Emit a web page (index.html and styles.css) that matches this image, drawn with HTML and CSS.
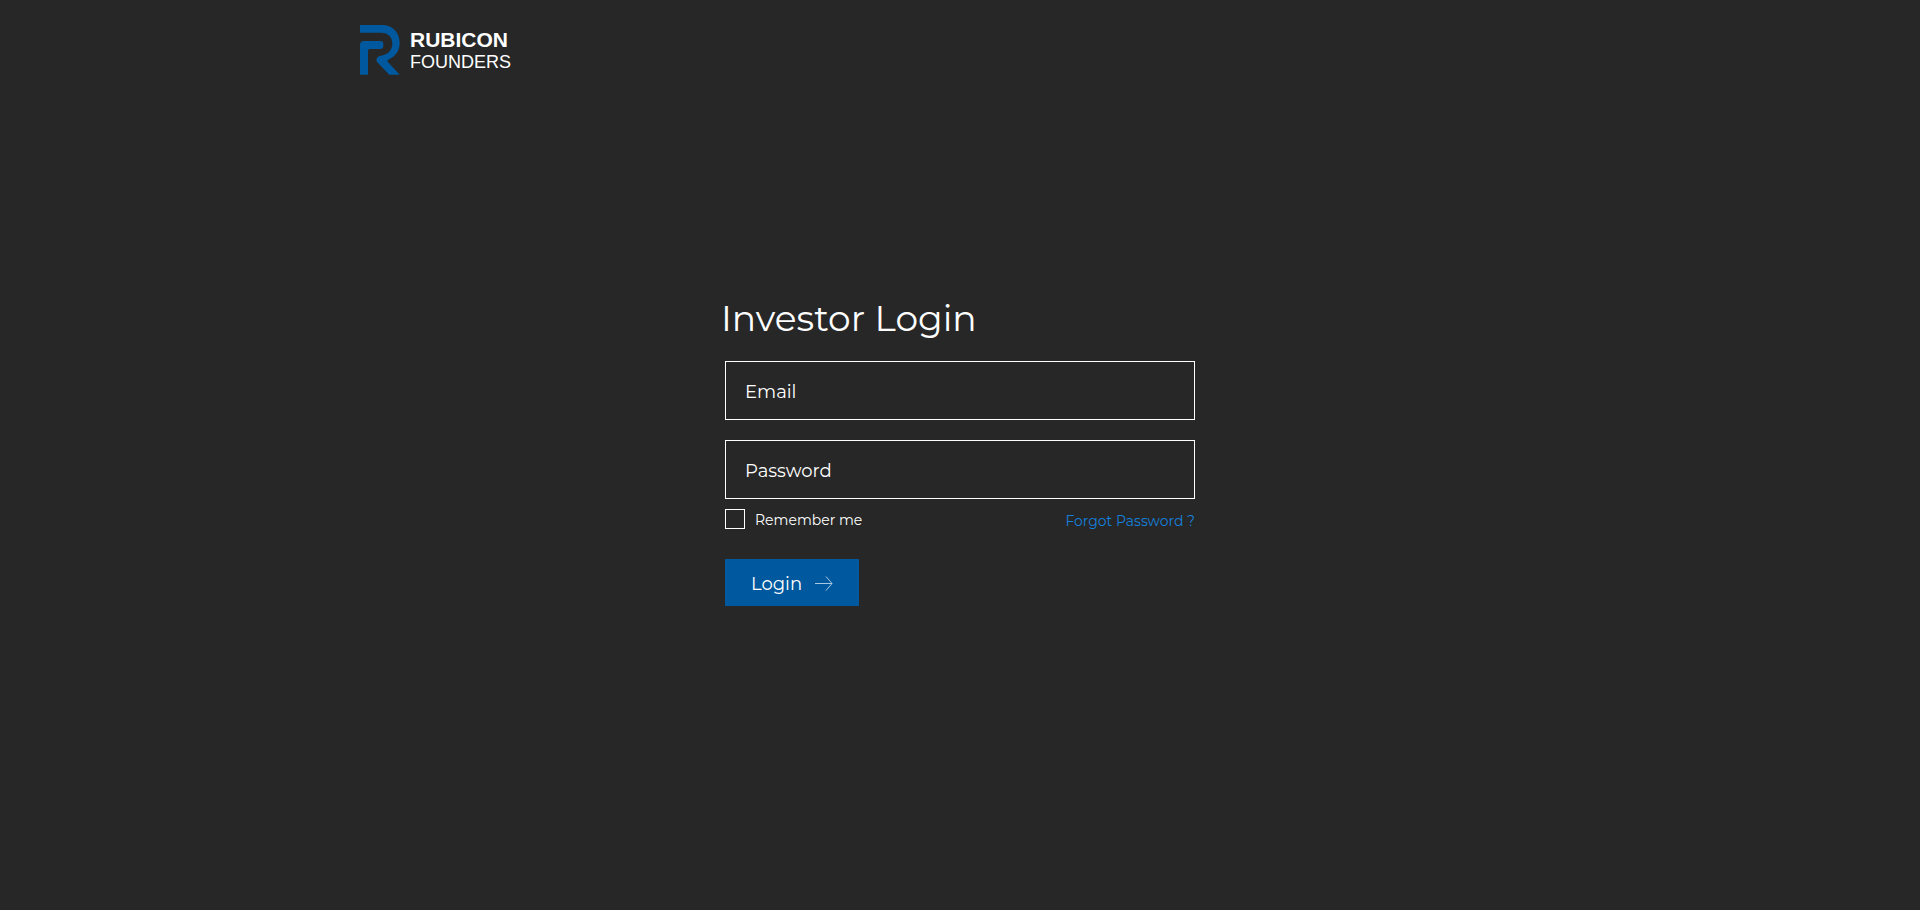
FILE: index.html
```html
<!DOCTYPE html>
<html lang="en">

<head>
    <meta charset="UTF-8">
    <meta name="viewport" content="width=device-width, initial-scale=1.0">
    <title>Investor Login</title>
    <link rel="stylesheet" href="styles.css">
</head>

<body>
    <header class="header">
        <a class="logo" href="#">
            <svg class="logo-mark" viewBox="0 0 120 150" aria-hidden="true">
                <path d="M0 0H66C98 0 119 23 119 54C119 77 107 93 87 103L81 108L119 149H88L52 112Q46 103 54 95L62 92C84 90 97 75 97 55C97 36 84 23 64 23H0Z" />
                <path d="M0 149V60Q0 48 12 48H60Q70 48 70 57V63Q70 72 60 72H30Q24 72 24 78V149Z" />
            </svg>
            <span class="logo-text">
                <span class="logo-top">RUBICON</span>
                <span class="logo-bottom">FOUNDERS</span>
            </span>
        </a>
    </header>

    <main class="main">
        <form class="login-form">
            <h1 class="title">Investor Login</h1>
            <input class="field" type="email" name="email" placeholder="Email" aria-label="Email">
            <input class="field" type="password" name="password" placeholder="Password" aria-label="Password">
            <div class="options">
                <label class="remember" for="remember">
                    <input class="checkbox" type="checkbox" id="remember" name="remember">
                    Remember me
                </label>
                <a class="forgot" href="#">Forgot Password ?</a>
            </div>
            <button class="login-button" type="submit">
                Login
                <svg class="arrow" viewBox="0 0 18 16" aria-hidden="true">
                    <path d="M0 7.5H17M11 0.5L17 7.5L11 14.5" />
                </svg>
            </button>
        </form>
    </main>
</body>

</html>
```
FILE: styles.css
```css
* {
    box-sizing: border-box;
}

body {
    display: flex;
    flex-direction: column;
    min-height: 100vh;
    margin: 0;
    background-color: #272727;
    color: #fff;
    font-family: Montserrat, Inter, sans-serif;
}

.header {
    width: 100%;
    max-width: 1200px;
    margin: 0 auto;
    padding: 25px 0;
}

.logo {
    display: inline-flex;
    gap: 10px;
    color: #fff;
    text-decoration: none;
    vertical-align: top;
}

.logo-mark {
    width: 40px;
    height: 50px;
    fill: #00599e;
}

.logo-text {
    display: flex;
    flex-direction: column;
    padding-top: 4px;
    font-family: "Liberation Sans", Arial, sans-serif;
    line-height: 22px;
}

.logo-top {
    font-size: 21px;
    font-weight: bold;
}

.logo-bottom {
    font-size: 18px;
}

.main {
    flex: 1;
    padding: 190px 20px 0;
}

.login-form {
    width: 100%;
    max-width: 470px;
    margin: 0 auto;
}

.title {
    margin: 0 0 14px -4px;
    font-size: 36px;
    font-weight: 400;
    line-height: 57px;
}

.field {
    display: block;
    width: 100%;
    height: 59px;
    margin-bottom: 20px;
    padding: 2px 19px 0;
    border: 1px solid #fff;
    border-radius: 0;
    background: transparent;
    color: #fff;
    font-family: inherit;
    font-size: 18px;
}

.field::placeholder {
    color: #fff;
    opacity: 1;
}

.options {
    display: flex;
    justify-content: space-between;
    margin: -10px 0 26px;
    font-size: 14px;
    line-height: 22px;
}

.remember {
    display: flex;
    gap: 10px;
}

.checkbox {
    width: 20px;
    height: 20px;
    margin: 0;
    border: 1px solid #fff;
    appearance: none;
}

.checkbox:checked {
    background-color: #00599e;
}

.forgot {
    color: #1580dc;
    line-height: 24px;
    text-decoration: none;
}

.login-button {
    display: flex;
    align-items: center;
    gap: 13px;
    height: 47px;
    padding: 2px 26px 0;
    border: none;
    background-color: #00599e;
    color: #fff;
    font-family: inherit;
    font-size: 18px;
    cursor: pointer;
}

.arrow {
    width: 18px;
    height: 16px;
    fill: none;
    stroke: #a9c8e0;
}
```
